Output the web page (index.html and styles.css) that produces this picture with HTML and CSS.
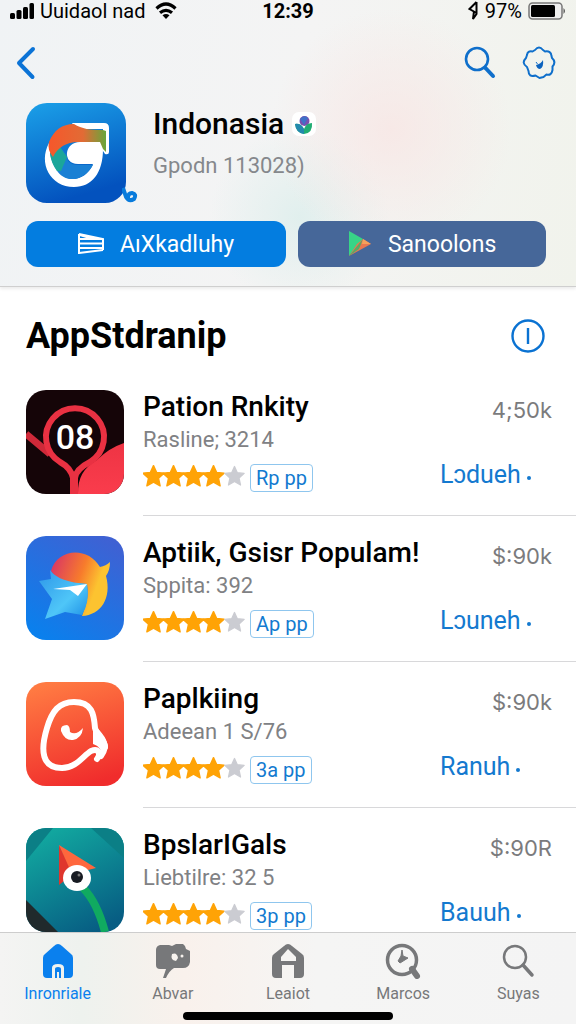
FILE: index.html
```html
<!DOCTYPE html>
<html lang="id">
<head>
    <meta charset="UTF-8">
    <meta name="viewport" content="width=device-width, initial-scale=1.0">
    <title>AppStdranip</title>
    <link rel="stylesheet" href="styles.css">
</head>
<body>
    <!-- Shared star shapes -->
    <svg class="defs" width="0" height="0" aria-hidden="true">
        <symbol id="star" viewBox="0 0 24 24">
            <path d="M12 1.200l3.200 7 7.800.8-5.800 5.300 1.700 8L12 18.300l-6.900 4 1.700-8L1 9l7.800-.8z" stroke-linejoin="round" stroke="currentColor" stroke-width="1.500" fill="currentColor"/>
        </symbol>
        <symbol id="stars" viewBox="0 0 102 24">
            <g color="#ffa306">
                <use href="#star" x="-1" y="0" width="23" height="24"/>
                <use href="#star" x="19" y="0" width="23" height="24"/>
                <use href="#star" x="39" y="0" width="23" height="24"/>
                <use href="#star" x="59" y="0" width="23" height="24"/>
                <path d="M12 10h60" stroke="currentColor" stroke-width="2"/>
            </g>
            <use href="#star" x="81" y="0" width="21" height="24" color="#cbccd2"/>
        </symbol>
    </svg>

    <header class="header">
        <div class="status-bar">
            <div class="status-left">
                <svg width="24" height="18" viewBox="0 0 24 18"><rect x="0" y="11" width="5" height="6" rx="1.500"/><rect x="6.500" y="8" width="5" height="9" rx="1.500"/><rect x="13" y="5" width="5" height="12" rx="1.500"/><rect x="19.500" y="1" width="4.500" height="16" rx="1.500"/></svg>
                <span>Uuidaol nad</span>
                <svg width="22" height="18" viewBox="0 0 22 18" fill="none" stroke="#000" stroke-width="3.200"><path d="M1.500 6.500Q11-2.500 20.500 6.500M5 10.800q6-5 12 0"/><path d="M11 17l-3.500-3.700q3.500-2.600 7 0z" fill="#000" stroke="none"/></svg>
            </div>
            <span class="time">12:39</span>
            <div class="status-right">
                <svg width="11" height="20" viewBox="0 0 11 20" fill="none" stroke="#000" stroke-width="2"><path d="M8.500 1L1.500 8l7 4M8.500 1v12L5 18l1-8"/></svg>
                <span>97%</span>
                <svg width="38" height="18" viewBox="0 0 38 18"><rect x="1" y="1" width="33" height="16" rx="3.500" fill="#eee" stroke="#777" stroke-width="1.500"/><rect x="3" y="3" width="24" height="12" rx="1.500"/><path d="M35.500 6q3 3 0 6z" fill="#555"/></svg>
            </div>
        </div>

        <div class="nav-bar">
            <button type="button" class="icon-btn" aria-label="Back">
                <svg width="20" height="34" viewBox="0 0 20 34" fill="none" stroke="#0b73d6" stroke-width="4" stroke-linecap="round" stroke-linejoin="round"><path d="M17 3L3 17l13.500 14"/></svg>
            </button>
            <div class="nav-actions">
                <button type="button" class="icon-btn" aria-label="Search">
                    <svg width="32" height="34" viewBox="0 0 32 34" fill="none" stroke="#0f6fcb" stroke-linecap="round"><circle cx="13" cy="13" r="11" stroke-width="2.600"/><path d="M21.500 22l7.500 8" stroke-width="4"/></svg>
                </button>
                <button type="button" class="icon-btn" aria-label="Settings">
                    <svg width="34" height="34" viewBox="0 0 34 34" fill="none" stroke="#0f6fcb" stroke-width="2" stroke-linejoin="round"><path d="M13 4q4-5 8 0l2 1.500q6-1 6.500 4.500l.5 2q4.500 4 .5 8.500v3.500q-1 6-6 4.500l-3 2.500-4 1-4-2.500q-7 2-7-4.500l-1.500-4q-6-4-1-9l1-3q.5-4.500 5.500-3.500z"/><path d="M14 19q5-1 7-5 1 7-3 9-3 0-4-4z" fill="#0c62be" stroke="none"/><path d="M14 16l1.500 2" stroke-width="1"/></svg>
                </button>
            </div>
        </div>

        <div class="profile">
            <div class="profile-icon">
                <svg width="100" height="100" viewBox="0 0 100 100">
                    <defs>
                        <linearGradient id="blueTile" x1="0" y1="0" x2="0.300" y2="1"><stop offset="0" stop-color="#1ba0e8"/><stop offset="1" stop-color="#0352be"/></linearGradient>
                        <linearGradient id="arc" x1="0" y1="0" x2="1" y2="0"><stop offset="0" stop-color="#f6572b"/><stop offset="0.600" stop-color="#e26b35"/><stop offset="1" stop-color="#68a63b"/></linearGradient>
                    </defs>
                    <rect width="100" height="100" rx="21" fill="url(#blueTile)"/>
                    <path d="M46 20h32q5 0 5 5v24q0 3-4 2l-2-3V26H50z" fill="#fff"/>
                    <path d="M23 40C12 60 24 84 48 84c18 0 29-14 29-38V39H54c-16 0-18 22-2 22h15C60 78 40 82 32 66z" fill="#fff"/>
                    <path d="M24 50l10-6 7 9q0 8 9 9h17C58 79 38 81 30 66q-5-8-6-16z" fill="#1a80d4"/>
                    <path d="M24 50l10-6 7 10-6 14-4 0q-6-8-7-18z" fill="#1ba69a"/>
                    <path d="M27 54q-6-7-4-15C28 27 36 21 48 21c8 5 16 6 29 6l3 1v21l-3-3-3-7H54c-11-1-22 4-27 15z" fill="url(#arc)"/>
                </svg>
                <svg class="profile-tag" width="16" height="16" viewBox="0 0 16 16" fill="none" stroke="#087bdc" stroke-width="4"><path d="M1 1l3 9q3 5 8 2 3-5-2-6-4 0-4 5"/></svg>
            </div>
            <div class="profile-text">
                <h1 class="profile-name">Indonasia
                    <svg width="24" height="24" viewBox="0 0 24 24"><rect width="24" height="24" rx="7" fill="#fff"/><circle cx="12.500" cy="9" r="5" fill="#7a4fae"/><path d="M8 7q4-5 8-1l-4 7z" fill="#3f70c8"/><path d="M3 12q6-1 9 5 2-6 8-6 1 10-8 11-8-1-9-10z" fill="#20ad73"/><path d="M3 12q6-1 9 5v5q-8-1-9-10z" fill="#2389ae"/></svg>
                </h1>
                <p class="profile-sub">Gpodn 113028)</p>
            </div>
        </div>

        <div class="profile-actions">
            <button type="button" class="action primary">
                <svg width="26" height="22" viewBox="0 0 26 22" fill="none" stroke="#fff" stroke-width="2"><path d="M1 1v20M1 1l24 5v11M1 6h23M1 10.500h24M1 15h24M1 20l24-3M2 2l13 4"/></svg>
                <span>AıXkadluhy</span>
            </button>
            <button type="button" class="action secondary">
                <svg width="24" height="26" viewBox="0 0 24 26"><path d="M1 0l14 8-14 17z" fill="#38d487"/><path d="M1 25l8-12 6-5 8 5z" fill="#e9784f"/><path d="M1 25L15 8l-4 10z" fill="#58a967"/><path d="M15 8l8 5-9 0z" fill="#f5a15b"/></svg>
                <span>Sanoolons</span>
            </button>
        </div>
    </header>

    <main class="content">
        <div class="section-head">
            <h2>AppStdranip</h2>
            <button type="button" class="icon-btn" aria-label="Info">
                <svg width="34" height="34" viewBox="0 0 34 34" fill="none" stroke="#0a72d2" stroke-width="2.400"><circle cx="17" cy="17" r="15.500"/><path d="M17 9v16"/></svg>
            </button>
        </div>

        <ul class="app-list">
            <li class="app">
                <svg class="app-icon" viewBox="0 0 98 104">
                    <defs><linearGradient id="redTile" x1="0" y1="0" x2="0" y2="1"><stop offset="0" stop-color="#ee3444"/><stop offset="1" stop-color="#fa3c4c"/></linearGradient></defs>
                    <rect width="98" height="104" fill="#150508"/>
                    <path d="M98 53q-15 5-27 17-20 11-19 34h46z" fill="url(#redTile)"/>
                    <path d="M0 44l24 20" stroke="#cf2939" stroke-width="7"/>
                    <path d="M47 104V88Q45 78 34 72A29 29 0 1 1 64 72Q50 79 49 88v16" fill="none" stroke="#e93142" stroke-width="6"/>
                    <text x="49" y="59" text-anchor="middle" class="tile-text">08</text>
                </svg>
                <div class="app-body">
                    <div class="app-main">
                        <h3>Pation Rnkity</h3>
                        <p>Rasline; 3214</p>
                        <div class="rating"><svg width="102" height="24" role="img" aria-label="4 / 5"><use href="#stars"/></svg><span class="badge">Rp pp</span></div>
                    </div>
                    <div class="app-side">
                        <span class="size">4;50k</span>
                        <button type="button" class="get">Lɔdueh <i></i></button>
                    </div>
                </div>
            </li>
            <li class="app">
                <svg class="app-icon" viewBox="0 0 98 104">
                    <defs>
                        <linearGradient id="indigoTile" x1="0.800" y1="0" x2="0.200" y2="1"><stop offset="0" stop-color="#3f61d3"/><stop offset="1" stop-color="#0a80ed"/></linearGradient>
                        <linearGradient id="sun" x1="0" y1="0.300" x2="1" y2="0.700"><stop offset="0" stop-color="#dc3b60"/><stop offset="0.450" stop-color="#f77b2c"/><stop offset="0.750" stop-color="#fcc330"/></linearGradient>
                        <linearGradient id="sky" x1="0" y1="0" x2="1" y2="1"><stop offset="0" stop-color="#2d96e8"/><stop offset="0.600" stop-color="#4fc6f8"/><stop offset="1" stop-color="#1a8ce5"/></linearGradient>
                    </defs>
                    <rect width="98" height="104" fill="url(#indigoTile)"/>
                    <path d="M25 35C31 12 62 10 74 31q6-1 10-5 0 8-4 14c6 22-5 39-24 40 4-11 7-18 5-32-16-1-29-2-36-13z" fill="url(#sun)"/>
                    <path d="M24 34q8 12 37 14 3 18-5 31l-17-3-20 7 7-20-13-18 12-2z" fill="url(#sky)"/>
                    <path d="M27 53l34-5-9 12-8-6z" fill="#fff"/>
                </svg>
                <div class="app-body">
                    <div class="app-main">
                        <h3>Aptiik, Gsisr Populam!</h3>
                        <p>Sppita: 392</p>
                        <div class="rating"><svg width="102" height="24" role="img" aria-label="4 / 5"><use href="#stars"/></svg><span class="badge">Ap pp</span></div>
                    </div>
                    <div class="app-side">
                        <span class="size">$:90k</span>
                        <button type="button" class="get">Lɔuneh <i></i></button>
                    </div>
                </div>
            </li>
            <li class="app">
                <svg class="app-icon" viewBox="0 0 98 104">
                    <defs><linearGradient id="orangeTile" x1="0.300" y1="0" x2="0.600" y2="1"><stop offset="0" stop-color="#ff7a42"/><stop offset="1" stop-color="#f02c2c"/></linearGradient></defs>
                    <rect width="98" height="104" fill="url(#orangeTile)"/>
                    <path d="M71 77c4-5 2-11-6-8-8 5-15 17-29 17-20 0-22-17-15-40 5-17 12-26 27-26 18 0 20 12 21 26 2 8 10 12 10 19q-1 5-4 9" fill="none" stroke="#fff" stroke-width="6" stroke-linecap="round" stroke-linejoin="round"/>
                    <path d="M67 42q15 13 15 24l-7 10q2-11-8-14z" fill="#fff"/>
                    <path d="M41 43q-7 0-6 6 4 10 12 9 9-2 10-12-7 8-13 4 0-6-3-7z" fill="#fff"/>
                </svg>
                <div class="app-body">
                    <div class="app-main">
                        <h3>Paplkiing</h3>
                        <p>Adeean 1 S/76</p>
                        <div class="rating"><svg width="102" height="24" role="img" aria-label="4 / 5"><use href="#stars"/></svg><span class="badge">3a pp</span></div>
                    </div>
                    <div class="app-side">
                        <span class="size">$:90k</span>
                        <button type="button" class="get">Ranuh <i></i></button>
                    </div>
                </div>
            </li>
            <li class="app">
                <svg class="app-icon" viewBox="0 0 98 104">
                    <defs><linearGradient id="tealTile" x1="0.200" y1="0" x2="0.700" y2="1"><stop offset="0" stop-color="#12aaa0"/><stop offset="1" stop-color="#075d83"/></linearGradient></defs>
                    <rect width="98" height="104" fill="url(#tealTile)"/>
                    <path d="M0 0h27L0 33zM65 0h33v30z" fill="#0b7f86"/>
                    <path d="M0 72l32 32H0z" fill="#202a2c"/>
                    <path d="M57 60q14 14 22 44" fill="none" stroke="#10aa60" stroke-width="8"/>
                    <path d="M33 17L33 57l14-11z" fill="#df362d"/>
                    <path d="M33 17l37 23-24 6z" fill="#ff673d"/>
                    <ellipse cx="51" cy="50" rx="14" ry="13" fill="#fff"/>
                    <circle cx="51" cy="49" r="6" fill="#171b22"/>
                    <circle cx="53" cy="47" r="1.500" fill="#777"/>
                </svg>
                <div class="app-body">
                    <div class="app-main">
                        <h3>BpslarIGals</h3>
                        <p>Liebtilre: 32 5</p>
                        <div class="rating"><svg width="102" height="24" role="img" aria-label="4 / 5"><use href="#stars"/></svg><span class="badge">3p pp</span></div>
                    </div>
                    <div class="app-side">
                        <span class="size">$:90R</span>
                        <button type="button" class="get">Bauuh <i></i></button>
                    </div>
                </div>
            </li>
        </ul>
    </main>

    <footer class="footer">
        <nav class="tabs">
            <a href="#" class="tab active">
                <svg width="36" height="36" viewBox="0 0 36 36"><path d="M18 1q2 0 4 2l9 8q2 1 2 4v16q0 4-4 4h-5V25q0-4-6-4t-6 4v10H7q-4 0-4-4V15q0-3 2-4l9-8q2-2 4-2z" fill="currentColor"/><path d="M15 35v-9q0-2 3-2t3 2v9h-2v-6h-2v6z" fill="currentColor"/></svg>
                <span>Inronriale</span>
            </a>
            <a href="#" class="tab">
                <svg width="36" height="36" viewBox="0 0 36 36"><path d="M5 2h9l3 1 4-2h7q3 2 3 5l4 2v11q-1 6-7 6h-9q-5 3-8 10h-3l3-9H5q-4 0-4-4V7q0-4 4-5z" fill="currentColor"/><path d="M17 11q5-2 6 4l-2 3q-6-1-4-7z" fill="#f7f2ee"/><circle cx="27" cy="13" r="1.500" fill="#f7f2ee"/></svg>
                <span>Abvar</span>
            </a>
            <a href="#" class="tab">
                <svg width="36" height="36" viewBox="0 0 36 36"><path d="M18 1q2 0 4 2l10 8q2 1 2 4v16q0 4-4 4h-6V22H12v13H6q-4 0-4-4V15q0-3 2-4l10-8q2-2 4-2z" fill="currentColor"/><path d="M18 6l8 8v4H11v-4z" fill="#f5f4f2"/></svg>
                <span>Leaiot</span>
            </a>
            <a href="#" class="tab">
                <svg width="36" height="36" viewBox="0 0 36 36" fill="none" stroke="currentColor"><circle cx="17" cy="17" r="14.500" stroke-width="3.500"/><path d="M27 26l5 7" stroke-width="6" stroke-linecap="round"/><path d="M17 7l1 6 5 2-8 5-2-2 3-5z" fill="currentColor" stroke-width="1"/></svg>
                <span>Marcos</span>
            </a>
            <a href="#" class="tab">
                <svg width="36" height="36" viewBox="0 0 36 36" fill="none" stroke="currentColor" stroke-linecap="round"><circle cx="15" cy="14" r="11" stroke-width="2.500"/><path d="M23 22l9 10" stroke-width="3.500"/></svg>
                <span>Suyas</span>
            </a>
        </nav>
        <div class="home-indicator"></div>
    </footer>
</body>
</html>
```
FILE: styles.css
```css
* {
    box-sizing: border-box;
}
body {
    margin: 0;
    height: 100vh;
    display: flex;
    flex-direction: column;
    overflow: hidden;
    background-color: #fff;
    color: #000;
    font-family: Roboto, "Liberation Sans", sans-serif;
}
h1, h2, h3, p, ul {
    margin: 0;
    padding: 0;
}
svg {
    display: block;
    flex-shrink: 0;
}
button {
    font-family: inherit;
    border: none;
    background: none;
    padding: 0;
    cursor: pointer;
}
.defs {
    position: absolute;
}

/* Header */
.header {
    flex-shrink: 0;
    padding-bottom: 19px;
    border-bottom: 1px solid #cfcfcf;
    box-shadow: 0 2px 3px rgba(0, 0, 0, 0.08);
    background:
        radial-gradient(circle at 68% 45%, rgba(248, 230, 228, 0.8), rgba(248, 230, 228, 0) 120px),
        radial-gradient(circle at 52% 76%, rgba(220, 238, 236, 0.8), rgba(220, 238, 236, 0) 90px),
        linear-gradient(100deg, #f0f3f5, #f4f4f4 50%, #f1f3ec);
}
.status-bar {
    display: grid;
    grid-template-columns: 1fr auto 1fr;
    align-items: center;
    height: 22px;
    padding: 0 10px;
    font-size: 20px;
    line-height: 22px;
}
.status-left, .status-right {
    display: flex;
    align-items: center;
    gap: 6px;
}
.status-left span {
    padding-right: 4px;
}
.status-right {
    justify-content: flex-end;
}
.time {
    font-weight: 700;
}
.nav-bar {
    display: flex;
    justify-content: space-between;
    align-items: center;
    height: 81px;
    padding: 0 20px 0 16px;
}
.nav-actions {
    display: flex;
    gap: 26px;
}
.profile {
    display: flex;
    gap: 27px;
    padding: 0 26px;
}
.profile-icon {
    position: relative;
}
.profile-tag {
    position: absolute;
    right: -12px;
    bottom: 0;
}
.profile-name {
    display: flex;
    align-items: center;
    gap: 8px;
    padding-top: 2px;
    font-size: 30px;
    font-weight: 500;
    line-height: 38px;
}
.profile-sub {
    padding-top: 7px;
    font-size: 22px;
    line-height: 32px;
    color: #85888c;
}
.profile-actions {
    display: flex;
    gap: 12px;
    padding: 18px 30px 0 26px;
}
.action {
    flex: 1;
    display: flex;
    justify-content: center;
    align-items: center;
    gap: 16px;
    height: 46px;
    border-radius: 12px;
    color: #fff;
    font-size: 23px;
}
.primary {
    flex-grow: 1.05;
    background-color: #037de0;
}
.secondary {
    background-color: #466799;
}

/* App list */
.content {
    flex: 1;
    min-height: 0;
    overflow: hidden;
}
.section-head {
    display: flex;
    justify-content: space-between;
    align-items: center;
    padding: 27px 31px 12px 26px;
}
.section-head h2 {
    font-size: 36px;
    line-height: 44px;
}
.app-list {
    list-style: none;
}
.app {
    display: flex;
    gap: 19px;
    padding-left: 26px;
}
.app-icon {
    width: 98px;
    height: 104px;
    margin-top: 20px;
    border-radius: 20px;
}
.tile-text {
    fill: #fff;
    font-size: 34px;
    font-weight: 500;
}
.app-body {
    flex: 1;
    display: flex;
    justify-content: space-between;
    height: 146px;
    padding: 20px 24px 0 0;
    border-bottom: 1px solid #d8d8da;
}
.app-main h3 {
    font-size: 28px;
    font-weight: 500;
    line-height: 34px;
    white-space: nowrap;
}
.app-main p {
    font-size: 22px;
    line-height: 32px;
    color: #808184;
}
.rating {
    display: flex;
    align-items: center;
    gap: 5px;
    padding-top: 8px;
}
.rating svg {
    margin-bottom: 4px;
}
.badge {
    padding: 0 5px;
    border: 1px solid #8fc6ee;
    border-radius: 4px;
    color: #127ad0;
    font-size: 20px;
    line-height: 26px;
}
.app-side {
    display: flex;
    flex-direction: column;
    align-items: flex-start;
    gap: 34px;
    width: 112px;
    padding-top: 5px;
}
.size {
    align-self: flex-end;
    font-family: Inter, Roboto, sans-serif;
    font-size: 22px;
    line-height: 30px;
    color: #7b7b7d;
}
.get {
    display: flex;
    align-items: center;
    gap: 6px;
    font-size: 25px;
    line-height: 32px;
    color: #1479cf;
}
.get i {
    width: 4px;
    height: 4px;
    margin-top: 6px;
    border-radius: 50%;
    background-color: #1479cf;
}

/* Tab bar */
.footer {
    flex-shrink: 0;
    padding-bottom: 4px;
    border-top: 1px solid #cdcdcd;
    background: linear-gradient(90deg, #f4f4f3, #eef2ee 14%, #f9f1ec 32%, #f5f5f4 55%, #f4f4f4);
}
.tabs {
    display: flex;
}
.tab {
    flex: 1;
    display: flex;
    flex-direction: column;
    align-items: center;
    gap: 5px;
    padding: 10px 0 8px;
    color: #77787a;
    font-size: 16px;
    line-height: 20px;
    text-decoration: none;
}
.tab.active {
    color: #0a80ee;
}
.home-indicator {
    width: 210px;
    height: 8px;
    margin: 0 auto;
    border-radius: 4px;
    background-color: #000;
}
```
